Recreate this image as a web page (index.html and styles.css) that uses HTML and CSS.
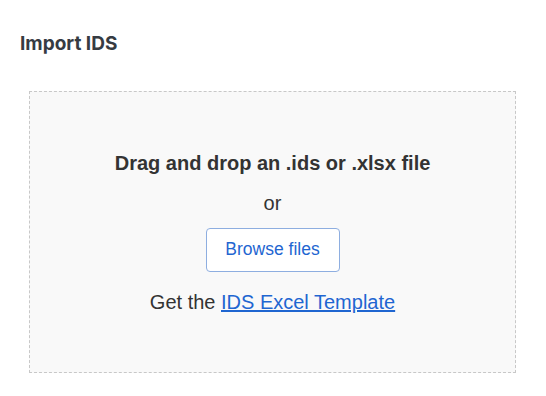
FILE: index.html
```html
<!DOCTYPE html>
<html lang="en">
<head>
    <meta charset="UTF-8">
    <meta name="viewport" content="width=device-width, initial-scale=1.0">
    <title>Import IDS</title>
    <link rel="stylesheet" href="styles.css">
</head>
<body>
    <div class="dialog">
        <h2 class="dialog-title">Import IDS</h2>

        <div class="dropzone">
            <p class="drop-title">Drag and drop an .ids or .xlsx file</p>
            <p class="drop-or">or</p>
            <button class="browse-btn">Browse files</button>
            <p class="template">Get the <a href="#">IDS Excel Template</a></p>
        </div>
    </div>
</body>
</html>
```

FILE: styles.css
```css
body {
    font-family: "Liberation Sans", Arial, sans-serif;
    margin: 0;
    padding: 0;
    background-color: #fff;
    color: #333;
}
.dialog {
    padding: 32px 30px 24px 20px;
}
.dialog-title {
    font-family: Inter, "Liberation Sans", sans-serif;
    font-size: 19px;
    font-weight: 700;
    color: #363b42;
    margin: 0 0 35px 0;
    line-height: 24px;
}
.dropzone {
    margin-left: 9px;
    height: 280px;
    border: 1px dashed #c8c8c8;
    background-color: #f9f9f9;
    display: flex;
    flex-direction: column;
    align-items: center;
    justify-content: center;
}
.dropzone p {
    margin: 0;
    font-size: 20px;
    line-height: 24px;
}
.drop-title {
    font-weight: bold;
}
.drop-or {
    margin-top: 16px !important;
}
.browse-btn {
    margin-top: 13px;
    width: 134px;
    height: 44px;
    background-color: #fff;
    border: 1px solid #8eaee0;
    border-radius: 4px;
    color: #1f66d1;
    font-family: "Liberation Sans", Arial, sans-serif;
    font-size: 17.5px;
    cursor: pointer;
}
.template {
    margin-top: 18px !important;
}
.template a {
    color: #1f66d1;
}
```
